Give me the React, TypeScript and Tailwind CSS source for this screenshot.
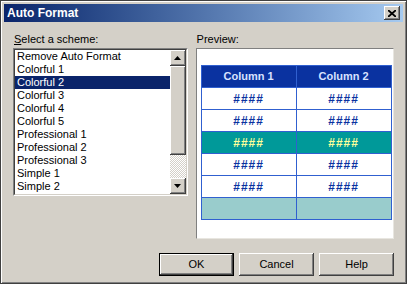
import React from 'react';

const schemes = [
  'Remove Auto Format',
  'Colorful 1',
  'Colorful 2',
  'Colorful 3',
  'Colorful 4',
  'Colorful 5',
  'Professional 1',
  'Professional 2',
  'Professional 3',
  'Simple 1',
  'Simple 2',
  'Simple 3',
];

const raised =
  'bg-[#d4d0c8] shadow-[inset_-1px_-1px_0_#404040,inset_1px_1px_0_#ffffff,inset_-2px_-2px_0_#808080]';

const Arrow: React.FC<{ up?: boolean }> = ({ up }) => (
  <svg width="7" height="4" viewBox="0 0 7 4" className="block">
    {up ? <polygon points="3.5,0 7,4 0,4" fill="#000" /> : <polygon points="0,0 7,0 3.5,4" fill="#000" />}
  </svg>
);

type Row = { bg: string; text: string; head?: boolean; cells: string[] };

const rows: Row[] = [
  { bg: 'bg-[#0a32a0]', text: 'text-[#d8e2ff]', head: true, cells: ['Column 1', 'Column 2'] },
  { bg: 'bg-white', text: 'text-[#0a32a0]', cells: ['####', '####'] },
  { bg: 'bg-white', text: 'text-[#0a32a0]', cells: ['####', '####'] },
  { bg: 'bg-[#009999]', text: 'text-[#ffff99]', cells: ['####', '####'] },
  { bg: 'bg-white', text: 'text-[#0a32a0]', cells: ['####', '####'] },
  { bg: 'bg-white', text: 'text-[#0a32a0]', cells: ['####', '####'] },
  { bg: 'bg-[#99cccc]', text: 'text-[#0a32a0]', cells: ['', ''] },
];

const DialogButton: React.FC<{ label: string; isDefault?: boolean }> = ({ label, isDefault }) => (
  <div
    className={`w-[75px] h-[23px] flex items-center justify-center text-[11px] text-black ${
      isDefault
        ? 'bg-[#d4d0c8] border border-black shadow-[inset_-1px_-1px_0_#404040,inset_1px_1px_0_#ffffff,inset_-2px_-2px_0_#808080]'
        : raised
    }`}
  >
    {label}
  </div>
);

export default function App() {
  return (
    <div className="w-[410px] h-[288px] bg-white font-['Liberation_Sans',Arial,sans-serif]">
      <div className="w-[407px] h-[284px] border border-[#404040] bg-[#d4d0c8] p-[3px] shadow-[inset_1px_1px_0_#ffffff,inset_-1px_-1px_0_#808080]">
        <div className="h-[18px] flex items-center justify-between pl-[3px] pr-[3px] bg-linear-to-r from-[#0a246a] to-[#a6caf0]">
          <span className="text-white font-bold text-[12px] leading-none">Auto Format</span>
          <div className={`w-[16px] h-[14px] flex items-center justify-center ${raised}`}>
            <svg width="8" height="7" viewBox="0 0 8 7">
              <path d="M0 0 L8 7 M8 0 L0 7" stroke="#000" strokeWidth="1.8" />
            </svg>
          </div>
        </div>

        <div className="px-[9px] pt-[11px]">
          <div className="flex gap-[8px]">
            <div className="w-[176px]">
              <div className="pl-[1px] h-[15px] text-[11px] leading-[13px] text-black">
                <span className="underline">S</span>elect a scheme:
              </div>
              <div className="h-[148px] border border-t-[#808080] border-l-[#808080] border-b-white border-r-white">
                <div className="h-full border border-t-[#404040] border-l-[#404040] border-b-[#d4d0c8] border-r-[#d4d0c8] bg-white flex">
                  <div className="flex-1 overflow-hidden">
                    {schemes.map((s) => (
                      <div
                        key={s}
                        className={`h-[13px] pl-[2px] text-[11px] leading-[13px] whitespace-nowrap ${
                          s === 'Colorful 2' ? 'bg-[#0a246a] text-white' : 'text-black'
                        }`}
                      >
                        {s}
                      </div>
                    ))}
                  </div>
                  <div className="w-[16px] flex flex-col">
                    <div className={`h-[16px] flex items-center justify-center ${raised}`}>
                      <Arrow up />
                    </div>
                    <div className={`h-[89px] ${raised}`} />
                    <div className="flex-1 bg-[repeating-conic-gradient(#ffffff_0%_25%,#d4d0c8_0%_50%)] bg-[length:2px_2px]" />
                    <div className={`h-[16px] flex items-center justify-center ${raised}`}>
                      <Arrow />
                    </div>
                  </div>
                </div>
              </div>
            </div>

            <div className="w-[200px]">
              <div className="pl-[1px] h-[15px] text-[11px] leading-[13px] text-black">Preview:</div>
              <div className="h-[191px] bg-white border border-t-[#808080] border-l-[#808080] border-b-[#e8e6e0] border-r-[#e8e6e0] pl-[4px] pt-[16px]">
                <div className="w-[191px] border-l border-t border-[#3060d0]">
                  {rows.map((r, i) => (
                    <div key={i} className="flex">
                      {r.cells.map((c, j) => (
                        <div
                          key={j}
                          className={`w-[95px] h-[22px] border-r border-b border-[#3060d0] flex items-center justify-center font-bold ${r.bg} ${r.text} ${
                            r.head ? 'text-[11px]' : 'text-[12px] tracking-[1px]'
                          }`}
                        >
                          {c}
                        </div>
                      ))}
                    </div>
                  ))}
                </div>
              </div>
            </div>
          </div>

          <div className="flex justify-end gap-[5px] mt-[14px]">
            <DialogButton label="OK" isDefault />
            <DialogButton label="Cancel" />
            <DialogButton label="Help" />
          </div>
        </div>
      </div>
    </div>
  );
}
